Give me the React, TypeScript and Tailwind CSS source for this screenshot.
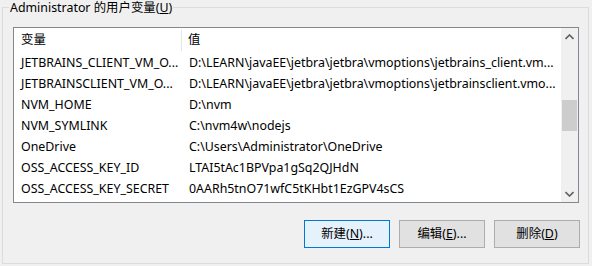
import { ReactNode } from 'react'

// names/values as the list view shows them (already cut with an ellipsis)
const rows: [string, string][] = [
  ['JETBRAINS_CLIENT_VM_O...', 'D:\\LEARN\\javaEE\\jetbra\\jetbra\\vmoptions\\jetbrains_client.vm...'],
  ['JETBRAINSCLIENT_VM_O...', 'D:\\LEARN\\javaEE\\jetbra\\jetbra\\vmoptions\\jetbrainsclient.vmo...'],
  ['NVM_HOME', 'D:\\nvm'],
  ['NVM_SYMLINK', 'C:\\nvm4w\\nodejs'],
  ['OneDrive', 'C:\\Users\\Administrator\\OneDrive'],
  ['OSS_ACCESS_KEY_ID', 'LTAI5tAc1BPVpa1gSq2QJHdN'],
  ['OSS_ACCESS_KEY_SECRET', '0AARh5tnO71wfC5tKHbt1EzGPV4sCS'],
]

function Chevron({ up }: { up?: boolean }) {
  return (
    <svg width="9" height="6" viewBox="0 0 9 6" className="block">
      <polyline
        points={up ? '0.5,5 4.5,1 8.5,5' : '0.5,1 4.5,5 8.5,1'}
        fill="none"
        stroke="#606060"
        strokeWidth="1.6"
      />
    </svg>
  )
}

function WinButton({ children, focused }: { children: ReactNode; focused?: boolean }) {
  return (
    <button
      className={
        focused
          ? 'w-[86px] h-[28px] border border-[#0078d7] bg-[#e5f1fb] text-[12.4px] text-black'
          : 'w-[86px] h-[28px] border border-[#adadad] bg-[#e1e1e1] text-[12.4px] text-black'
      }
    >
      {children}
    </button>
  )
}

export default function App() {
  return (
    <div
      className="w-[592px] h-[266px] bg-[#f0f0f0] overflow-hidden pt-[7px] pl-[2px]"
      style={{ fontFamily: '"Noto Sans", "Noto Sans CJK SC", sans-serif' }}
    >
      {/* group box */}
      <div className="relative w-[587px] h-[257px] border border-[#dcdcdc] pl-[10px] pt-[19px]">
        <div className="absolute -top-[8px] left-[6px] px-[1px] bg-[#f0f0f0] text-[12.4px] leading-[16px] text-black">
          Administrator 的用户变量(<span className="underline">U</span>)
        </div>

        {/* list view */}
        <div className="w-[566px] h-[176px] border border-[#828790] bg-white flex">
          <div className="flex-1 min-w-0 overflow-hidden">
            <div className="h-[25px] flex items-center text-[12.4px] text-black">
              <div className="w-[168px] pl-[7px] h-[21px] flex items-center border-r border-[#e5e5e5]">变量</div>
              <div className="pl-[6px]">值</div>
            </div>
            {rows.map(([name, value]) => (
              <div key={name} className="h-[21px] flex items-center text-[12.4px] text-black">
                <div className="w-[168px] shrink-0 pl-[7px] whitespace-nowrap overflow-hidden">{name}</div>
                <div className="flex-1 min-w-0 pl-[7px] whitespace-nowrap">{value}</div>
              </div>
            ))}
          </div>

          {/* scrollbar */}
          <div className="w-[17px] shrink-0 bg-[#f0f0f0] flex flex-col items-center">
            <div className="h-[17px] w-full flex items-center justify-center">
              <Chevron up />
            </div>
            <div className="flex-1 w-full pl-[1px] pt-[55px]">
              <div className="w-[15px] h-[31px] bg-[#cdcdcd]" />
            </div>
            <div className="h-[17px] w-full flex items-center justify-center">
              <Chevron />
            </div>
          </div>
        </div>

        {/* buttons */}
        <div className="flex gap-[9px] mt-[17px] ml-[291px]">
          <WinButton focused>
            新建(<span className="underline">N</span>)...
          </WinButton>
          <WinButton>
            编辑(<span className="underline">E</span>)...
          </WinButton>
          <WinButton>
            删除(<span className="underline">D</span>)
          </WinButton>
        </div>
      </div>
    </div>
  )
}
